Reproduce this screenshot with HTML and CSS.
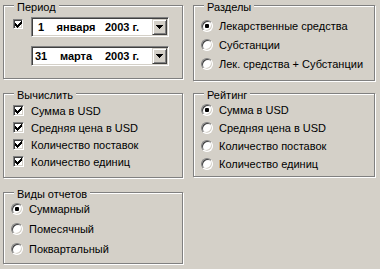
FILE: index.html
```html
<!DOCTYPE html>
<html lang="ru">
<head>
  <meta charset="UTF-8">
  <title>Параметры отчета</title>
  <link rel="stylesheet" href="styles.css">
</head>
<body>

  <!-- галочка и стрелка, используются ниже через <use> -->
  <svg width="0" height="0" class="sprites">
    <symbol id="galka" viewBox="0 0 7 7">
      <path d="M6 0h1v1h-1z M5 1h2v1h-2z M0 2h1v1h-1z M4 2h3v1h-3z M0 3h2v1h-2z M3 3h3v1h-3z M0 4h5v1h-5z M1 5h3v1h-3z M2 6h1v1h-1z" fill="#000"/>
    </symbol>
    <symbol id="strelka" viewBox="0 0 7 4">
      <path d="M0 0h7v1h-7z M1 1h5v1h-5z M2 2h3v1h-3z M3 3h1v1h-1z" fill="#000"/>
    </symbol>
  </svg>

  <div id="dialog">

    <!-- Период -->
    <div class="gruppa" id="period">
      <span class="legenda">Период</span>
      <span class="check malenkiy"><svg><use href="#galka"/></svg></span>
      <div class="daty">
        <div class="combo">
          <span class="den">1</span><span class="mesyac">января</span><span class="god">2003 г.</span>
          <span class="knopka"><svg><use href="#strelka"/></svg></span>
        </div>
        <div class="combo">
          <span class="den">31</span><span class="mesyac">марта</span><span class="god">2003 г.</span>
          <span class="knopka"><svg><use href="#strelka"/></svg></span>
        </div>
      </div>
    </div>

    <!-- Разделы -->
    <div class="gruppa" id="razdely">
      <span class="legenda">Разделы</span>
      <div class="stroka"><span class="radio vybran"></span>Лекарственные средства</div>
      <div class="stroka"><span class="radio"></span>Субстанции</div>
      <div class="stroka"><span class="radio"></span>Лек. средства + Субстанции</div>
    </div>

    <!-- Вычислить -->
    <div class="gruppa" id="vychislit">
      <span class="legenda">Вычислить</span>
      <div class="stroka"><span class="check"><svg><use href="#galka"/></svg></span>Сумма в USD</div>
      <div class="stroka"><span class="check"><svg><use href="#galka"/></svg></span>Средняя цена в USD</div>
      <div class="stroka"><span class="check"><svg><use href="#galka"/></svg></span>Количество поставок</div>
      <div class="stroka"><span class="check"><svg><use href="#galka"/></svg></span>Количество единиц</div>
    </div>

    <!-- Рейтинг -->
    <div class="gruppa" id="reyting">
      <span class="legenda">Рейтинг</span>
      <div class="stroka"><span class="radio vybran"></span>Сумма в USD</div>
      <div class="stroka"><span class="radio"></span>Средняя цена в USD</div>
      <div class="stroka"><span class="radio"></span>Количество поставок</div>
      <div class="stroka"><span class="radio"></span>Количество единиц</div>
    </div>

    <!-- Виды отчетов -->
    <div class="gruppa" id="vidy">
      <span class="legenda">Виды отчетов</span>
      <div class="stroka"><span class="radio vybran"></span>Суммарный</div>
      <div class="stroka"><span class="radio"></span>Помесячный</div>
      <div class="stroka"><span class="radio"></span>Поквартальный</div>
    </div>

  </div>

</body>
</html>
```

FILE: styles.css
```css
body {
  margin: 0;
  padding: 5px 0 0 3px;
  height: 269px;
  box-sizing: border-box;
  overflow: hidden;
  background: #d4d0c8;
  font-family: "Liberation Sans", Arial, sans-serif;
  font-size: 11px;
  color: #000;
}

.sprites {
  position: absolute;
}

#dialog {
  display: grid;
  grid-template-columns: 180px 182px;
  grid-template-rows: 88px 99px 73px;
  column-gap: 10px;
  align-items: start;
}

/* рамка группы: серая линия + белая */
.gruppa {
  position: relative;
  box-sizing: border-box;
  border: 1px solid #808080;
  box-shadow: inset 1px 1px 0 #fff, 1px 1px 0 #fff;
  display: flex;
  flex-direction: column;
}

.legenda {
  position: absolute;
  top: -5px;
  left: 10px;
  padding: 0 3px;
  line-height: 13px;
  background: #d4d0c8;
}

.stroka {
  display: flex;
  align-items: center;
  white-space: nowrap;
}

/* чекбокс */
.check {
  flex: none;
  width: 11px;
  height: 11px;
  box-sizing: border-box;
  border: 1px solid;
  border-color: #808080 #fff #fff #808080;
  box-shadow: inset 1px 1px 0 #404040, inset -1px -1px 0 #d4d0c8;
  background: #fff;
  display: flex;
  align-items: center;
  justify-content: center;
}

.check svg {
  width: 7px;
  height: 7px;
}

.check.malenkiy {
  width: 10px;
  height: 10px;
  margin-top: 2px;
}

/* радиокнопка */
.radio {
  flex: none;
  width: 12px;
  height: 12px;
  box-sizing: border-box;
  border-radius: 50%;
  border: 1px solid;
  border-color: #808080 #fff #fff #808080;
  box-shadow: inset 1px 1px 0 #404040, inset -1px -1px 0 #d4d0c8;
  background: #fff;
  display: flex;
  align-items: center;
  justify-content: center;
}

.radio.vybran::after {
  content: '';
  width: 4px;
  height: 4px;
  border-radius: 1px;
  background: #000;
}

/* Период */
#period {
  height: 74px;
  flex-direction: row;
  align-items: flex-start;
  gap: 8px;
  padding: 11px 0 0 9px;
}

.daty {
  display: flex;
  flex-direction: column;
  gap: 9px;
}

.combo {
  width: 138px;
  height: 20px;
  box-sizing: border-box;
  padding: 1px;
  border: 1px solid;
  border-color: #808080 #fff #fff #808080;
  box-shadow: inset 1px 1px 0 #404040, inset -1px -1px 0 #d4d0c8;
  background: #fff;
  display: flex;
  align-items: center;
  font-weight: bold;
  line-height: 16px;
}

.den {
  width: 16px;
  text-align: center;
}

.mesyac {
  width: 46px;
  margin-left: 4px;
  text-align: center;
}

.god {
  margin-left: 6px;
}

.knopka {
  margin-left: auto;
  width: 15px;
  height: 16px;
  box-sizing: border-box;
  border: 1px solid;
  border-color: #d4d0c8 #404040 #404040 #d4d0c8;
  box-shadow: inset 1px 1px 0 #fff, inset -1px -1px 0 #808080;
  background: #d4d0c8;
  display: flex;
  align-items: center;
  justify-content: center;
}

.knopka svg {
  width: 7px;
  height: 4px;
}

/* Разделы */
#razdely {
  height: 76px;
  padding: 10px 0 0 7px;
}

#razdely .stroka {
  height: 19px;
  gap: 6px;
}

/* Вычислить */
#vychislit {
  height: 85px;
  padding: 8px 0 0 9px;
}

#vychislit .stroka {
  height: 17px;
  gap: 7px;
}

/* Рейтинг */
#reyting {
  height: 84px;
  padding: 7px 0 0 7px;
}

#reyting .stroka {
  height: 18px;
  gap: 6px;
}

/* Виды отчетов */
#vidy {
  height: 72px;
  padding: 6px 0 0 7px;
}

#vidy .stroka {
  height: 20px;
  gap: 6px;
}
```
